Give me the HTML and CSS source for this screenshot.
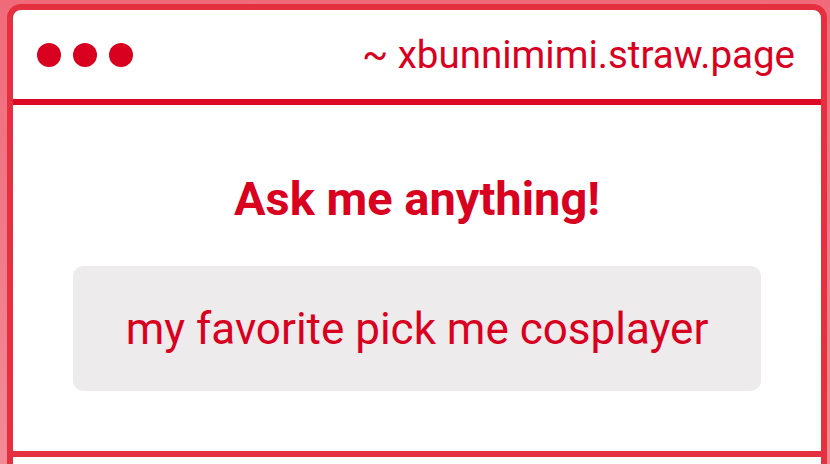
FILE: index.html
```html
<!DOCTYPE html>
<html>
<head>
<meta charset="utf-8">
<link rel="stylesheet" href="styles.css">
</head>
<body>
<div class="window">
  <header class="bar">
    <div class="dots"><span class="dot"></span><span class="dot"></span><span class="dot"></span></div>
    <div class="url">~ xbunnimimi.straw.page</div>
  </header>
  <main class="content">
    <h1 class="title">Ask me anything!</h1>
    <div class="question">my favorite pick me cosplayer</div>
  </main>
  <footer class="foot"></footer>
</div>
</body>
</html>
```
FILE: styles.css
```css
html, body {
  margin: 0;
  padding: 0;
  height: 100%;
  overflow: hidden;
}
body {
  background: linear-gradient(180deg, #f06a7a 0%, #f28a96 100%);
  font-family: Roboto, "Liberation Sans", sans-serif;
  color: #d9001f;
  padding: 4px 3px 0 7px;
  box-sizing: border-box;
}
.window {
  background: #fff;
  border: 6px solid #e5303f;
  border-radius: 14px;
  height: 600px;
}
.bar {
  height: 89px;
  border-bottom: 6px solid #dc0a24;
  display: flex;
  align-items: center;
  justify-content: space-between;
  padding: 0 26px 0 24px;
}
.dots {
  display: flex;
  gap: 12px;
}
.dot {
  width: 24px;
  height: 24px;
  border-radius: 50%;
  background: #d9001f;
}
.url {
  font-size: 38.5px;
  line-height: 44px;
}
.content {
  display: flex;
  flex-direction: column;
  align-items: center;
  padding: 67px 60px 60px;
  border-bottom: 6px solid #e5303f;
}
.title {
  margin: 0 0 40px;
  font-size: 47px;
  line-height: 54px;
  font-weight: 700;
}
.question {
  align-self: stretch;
  height: 125px;
  background: #edebec;
  border-radius: 10px;
  display: flex;
  align-items: center;
  justify-content: center;
  font-size: 44px;
}
```
